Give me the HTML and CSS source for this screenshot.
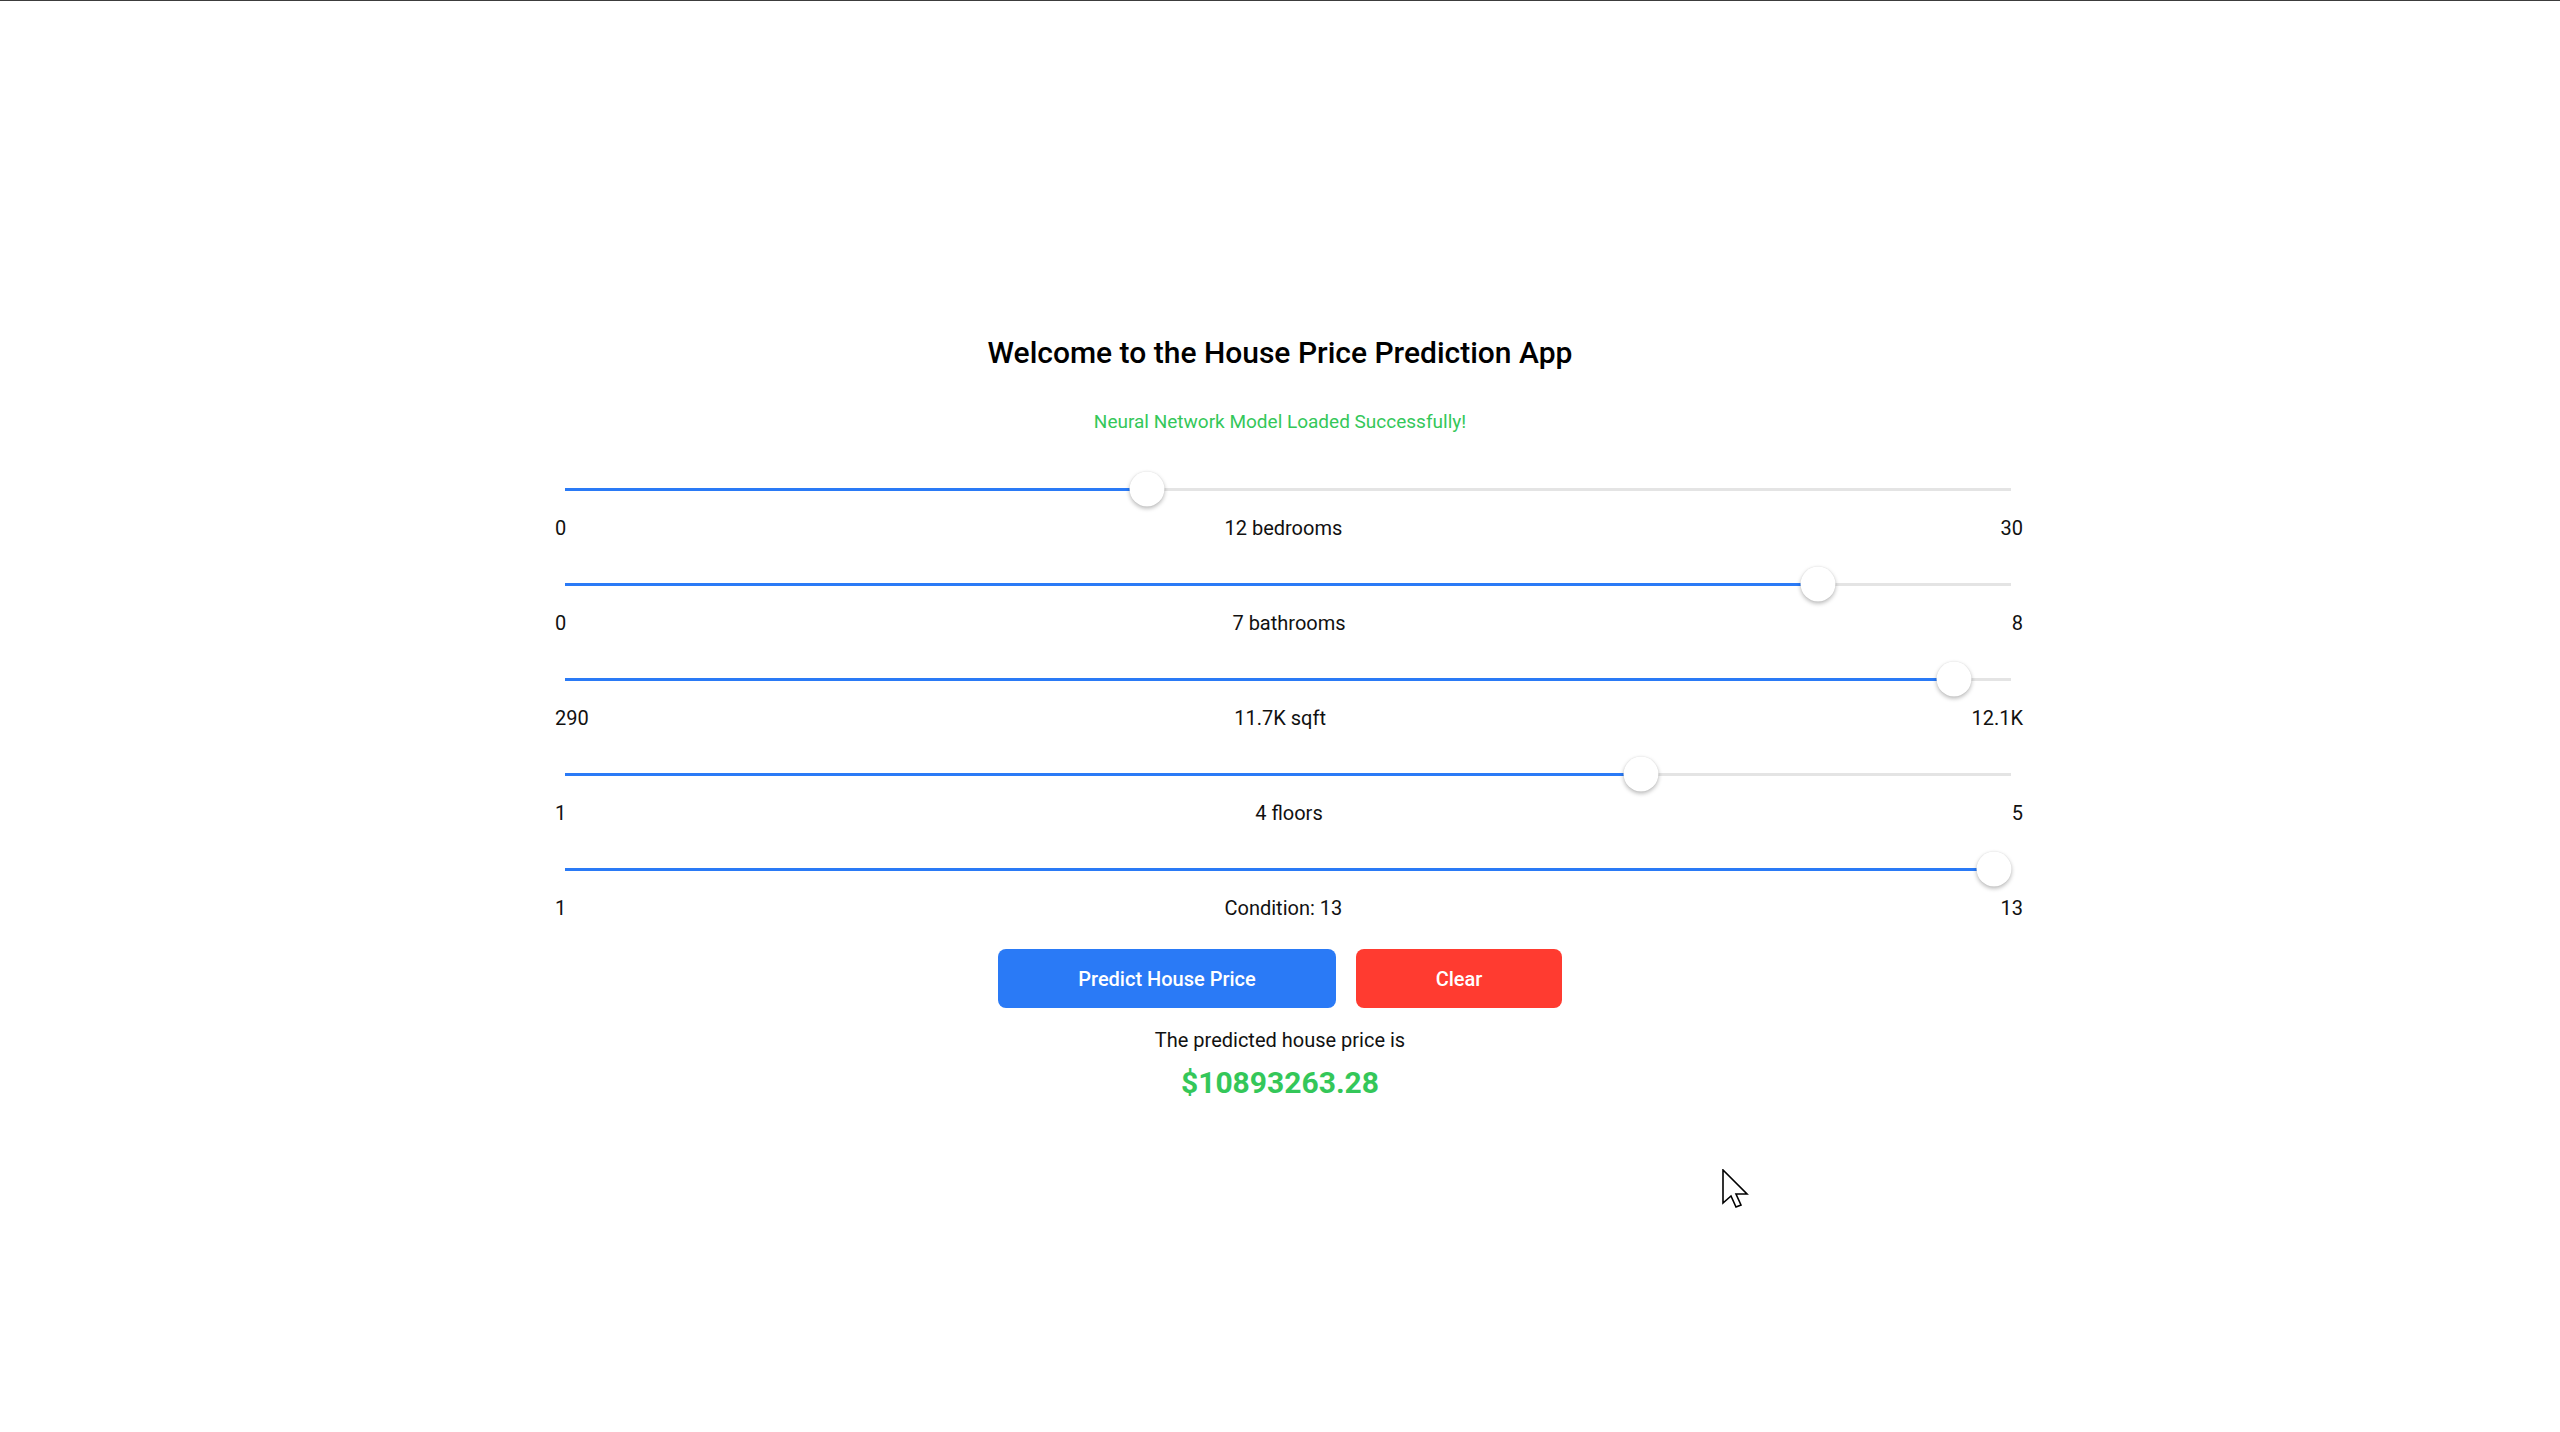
FILE: index.html
```html
<!DOCTYPE html>
<html lang="en">
<head>
<meta charset="utf-8">
<title>House Price Prediction</title>
<link rel="stylesheet" href="styles.css">
</head>
<body>
<main class="app">
  <h1 class="title">Welcome to the House Price Prediction App</h1>
  <p class="status">Neural Network Model Loaded Successfully!</p>

  <section class="sliders">
    <div class="field">
      <div class="slider"><div class="track"><div class="fill" style="--p:0.4"></div><div class="thumb" style="--p:0.4"></div></div></div>
      <div class="labels"><span>0</span><span>12 bedrooms</span><span>30</span></div>
    </div>
    <div class="field">
      <div class="slider"><div class="track"><div class="fill" style="--p:0.875"></div><div class="thumb" style="--p:0.875"></div></div></div>
      <div class="labels"><span>0</span><span>7 bathrooms</span><span>8</span></div>
    </div>
    <div class="field">
      <div class="slider"><div class="track"><div class="fill" style="--p:0.9717"></div><div class="thumb" style="--p:0.9717"></div></div></div>
      <div class="labels"><span>290</span><span>11.7K sqft</span><span>12.1K</span></div>
    </div>
    <div class="field">
      <div class="slider"><div class="track"><div class="fill" style="--p:0.75"></div><div class="thumb" style="--p:0.75"></div></div></div>
      <div class="labels"><span>1</span><span>4 floors</span><span>5</span></div>
    </div>
    <div class="field">
      <div class="slider"><div class="track"><div class="fill" style="--p:1"></div><div class="thumb" style="--p:1"></div></div></div>
      <div class="labels"><span>1</span><span>Condition: 13</span><span>13</span></div>
    </div>
  </section>

  <div class="actions">
    <button class="btn btn-primary" type="button">Predict House Price</button>
    <button class="btn btn-danger" type="button">Clear</button>
  </div>

  <p class="result-label">The predicted house price is</p>
  <p class="result-value">$10893263.28</p>
</main>

<svg class="cursor" width="28" height="42" viewBox="-1 -1 28 42" aria-hidden="true">
  <path d="M0 0 L0 33 L8 26 L13 37 L18 35 L13 24 L24 24 Z" fill="#fff" stroke="#000" stroke-width="1.6" stroke-linejoin="miter"/>
</svg>
</body>
</html>
```

FILE: styles.css
```css
html, body {
  margin: 0;
  padding: 0;
  background: #ffffff;
}

body {
  border-top: 1px solid #3c3c3c;
  font-family: Roboto, "Liberation Sans", Arial, sans-serif;
  color: #111111;
  min-height: 1431px;
  position: relative;
}

.app {
  display: flex;
  flex-direction: column;
  align-items: center;
  padding-top: 334px;
}

.title {
  margin: 0;
  font-size: 30px;
  line-height: 36px;
  font-weight: 500;
  color: #000000;
}

.status {
  margin: 39px 0 0;
  font-size: 19px;
  line-height: 23px;
  color: #34c759;
}

.sliders {
  align-self: flex-start;
  margin-left: calc(50% - 725px);
  width: 1468px;
  margin-top: 36px;
  display: flex;
  flex-direction: column;
  gap: 24px;
}

.field {
  display: flex;
  flex-direction: column;
}

.slider {
  height: 40px;
  display: flex;
  align-items: center;
  padding: 0 12px 0 10px;
}

.track {
  position: relative;
  flex: 1;
  height: 3px;
  background: #e4e4e4;
}

.fill {
  position: absolute;
  left: 0;
  top: 0;
  height: 3px;
  width: calc(17px + var(--p) * (100% - 34px));
  background: #2a7af6;
}

.thumb {
  position: absolute;
  top: 50%;
  left: calc(17px + var(--p) * (100% - 34px));
  width: 35px;
  height: 35px;
  border-radius: 50%;
  background: #ffffff;
  box-shadow: 0 2px 4px rgba(0, 0, 0, 0.28), 0 0 1px rgba(0, 0, 0, 0.12);
  transform: translate(-50%, -50%);
}

.labels {
  margin-top: 7px;
  display: flex;
  justify-content: space-between;
  font-size: 20px;
  line-height: 24px;
  color: #111111;
}

.actions {
  margin-top: 29px;
  display: flex;
  gap: 20px;
}

.btn {
  height: 59px;
  border: none;
  border-radius: 8px;
  font-family: Roboto, "Liberation Sans", Arial, sans-serif;
  font-size: 20px;
  font-weight: 500;
  color: #ffffff;
  cursor: pointer;
}

.btn-primary {
  width: 338px;
  background: #2a7af6;
}

.btn-danger {
  width: 206px;
  background: #ff3b30;
}

.result-label {
  margin: 20px 0 0;
  font-size: 20px;
  line-height: 24px;
  color: #111111;
}

.result-value {
  margin: 12px 0 0;
  font-size: 30px;
  line-height: 38px;
  font-weight: 700;
  color: #34c759;
}

.cursor {
  position: absolute;
  left: 1722px;
  top: 1168px;
}
```
